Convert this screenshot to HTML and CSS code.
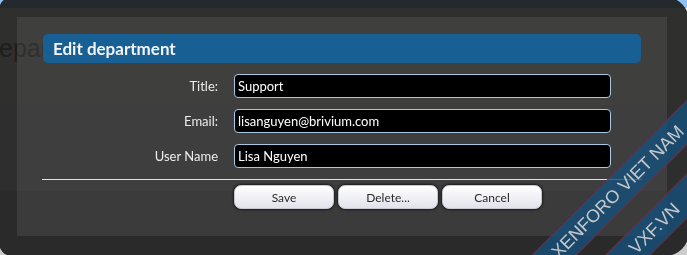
FILE: index.html
```html
<!DOCTYPE html>
<html lang="en">
  <head>
    <meta charset="UTF-8" />
    <meta name="viewport" content="width=device-width, initial-scale=1.0" />
    <title>Edit department</title>
    <link rel="stylesheet" href="styles.css">
  </head>
  <body>
    <div class="page">
      <div class="page-header"></div>
      <div class="page-title">
        <h1>Departments</h1>
      </div>
      <div class="page-body"></div>
      <div class="page-footer"></div>
    </div>

    <div class="overlay">
      <div class="overlay-inner">
        <h2 class="dialog-title">Edit department</h2>

        <form class="dialog-form">
          <div class="row">
            <label for="title">Title:</label>
            <input id="title" type="text" value="Support" />
          </div>
          <div class="row">
            <label for="email">Email:</label>
            <input id="email" type="text" value="lisanguyen@brivium.com" />
          </div>
          <div class="row">
            <label for="user">User Name</label>
            <input id="user" type="text" value="Lisa Nguyen" />
          </div>

          <div class="separator"></div>

          <div class="buttons">
            <button type="button" class="button">Save</button>
            <button type="button" class="button">Delete...</button>
            <button type="button" class="button">Cancel</button>
          </div>
        </form>
      </div>
    </div>

    <div class="watermark">
      <div class="band">XENFORO VIET NAM</div>
      <div class="band">VXF.VN</div>
    </div>
  </body>
</html>
```

FILE: styles.css
```css
:root {
  --title-blue: #185f93;
  --input-border: #a7c8e0;
  --label: #ececec;
  --sm: 12px;
  --md: 13px;
  --lg: 17px;
}
body {
  margin: 0;
  overflow: hidden;
  background: #ffffff;
  font-family: "Lato", "Liberation Sans", sans-serif;
}

/* page behind the overlay */
.page {
  height: 100vh;
  display: flex;
  flex-direction: column;
}
.page-header {
  height: 8px;
  background: #90c2f4;
}
.page-title {
  height: 97px;
  background: #fffaf2;
  padding-top: 25px;
  box-sizing: border-box;
}
.page-title h1 {
  margin: 0 0 0 -19px;
  font-family: "Liberation Sans", sans-serif;
  font-weight: normal;
  font-size: 25px;
  line-height: 30px;
  color: #505050;
}
.page-body {
  height: 86px;
  background: #eeeeee;
}
.page-footer {
  flex: 1;
  background: #cccccc;
}

/* dialog */
.overlay {
  position: fixed;
  top: -3px;
  left: -1px;
  right: -2px;
  bottom: -1px;
  display: flex;
  padding: 20px 22px 20px 18px;
  background: rgba(24, 24, 24, 0.9);
  border-radius: 13px 24px 24px 13px;
}
.overlay-inner {
  flex: 1;
  padding: 17px 25px 0;
  background: rgba(255, 255, 255, 0.08);
}
.dialog-title {
  margin: 0 1px;
  height: 29px;
  padding-left: 10px;
  border-radius: 5px;
  background: var(--title-blue);
  color: #f4f4f4;
  font-size: var(--lg);
  font-weight: bold;
  line-height: 29px;
}
.dialog-form {
  display: flex;
  flex-direction: column;
  gap: 11px;
  margin-top: 11px;
}
.row {
  display: grid;
  grid-template-columns: 176px 377px;
  gap: 16px;
  align-items: center;
}
.row label {
  text-align: right;
  font-size: var(--md);
  color: var(--label);
}
.row input {
  height: 24px;
  box-sizing: border-box;
  margin: 0;
  padding: 0 3px;
  border: 1px solid var(--input-border);
  border-radius: 4px;
  background: #000000;
  color: #ffffff;
  font-family: inherit;
  font-size: var(--md);
  outline: none;
}
.separator {
  height: 1px;
  background: #d8e4ee;
}
.buttons {
  display: flex;
  gap: 4px;
  margin-top: -6px;
  padding-left: 192px;
}
.button {
  width: 100px;
  height: 24px;
  padding: 0;
  border: 1px solid #c8c8d2;
  border-radius: 7px;
  background: linear-gradient(#ffffff, #e2e2ec);
  box-shadow: 0 0 2px 1px #1c1c1c;
  color: #2a2a2a;
  font-family: inherit;
  font-size: var(--sm);
}

/* watermark */
.watermark {
  position: fixed;
  left: 436px;
  top: 168px;
  width: 400px;
  display: flex;
  flex-direction: column;
  gap: 20px;
  transform: rotate(-45deg);
  pointer-events: none;
}
.band {
  height: 32px;
  box-sizing: border-box;
  border-top: 1px solid rgba(130, 40, 55, 0.7);
  border-bottom: 1px solid rgba(130, 40, 55, 0.7);
  background: rgba(22, 80, 122, 0.8);
  color: #c4c8cc;
  font-family: "Liberation Sans", sans-serif;
  font-size: 18px;
  line-height: 30px;
  text-align: center;
}
```
